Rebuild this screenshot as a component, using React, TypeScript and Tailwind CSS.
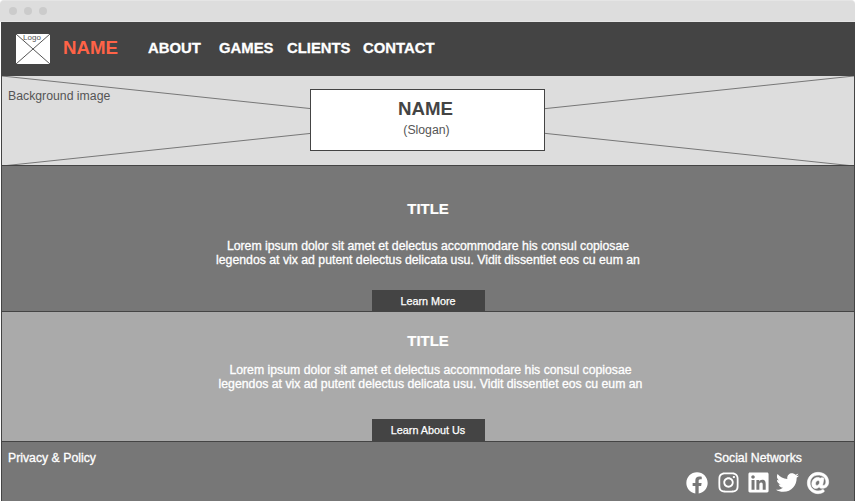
import type { ReactNode } from "react";
import { FaFacebook, FaInstagram, FaLinkedin, FaTwitter, FaAt } from "react-icons/fa";

function Cross({ className }: { className: string }) {
  return (
    <svg className={`absolute top-0 left-0 w-full ${className}`} viewBox="0 0 100 100" preserveAspectRatio="none" fill="none" stroke="currentColor">
      <path d="M0 0L100 100M0 100L100 0" vectorEffect="non-scaling-stroke" />
    </svg>
  );
}

function Section({ className, gap, button, buttonClass }: {
  className: string;
  gap: string;
  button: string;
  buttonClass: string;
}) {
  return (
    <section className={`flex shrink-0 flex-col items-center border-b border-[#444] text-white ${className}`}>
      <h2 className="text-[14.9px] leading-[18px] font-bold [-webkit-text-stroke:0.2px_white]">TITLE</h2>
      <p className={`text-center text-[12.27px] leading-[14px] [-webkit-text-stroke:0.3px_white] ${gap}`}>
        Lorem ipsum dolor sit amet et delectus accommodare his consul copiosae
        <br />
        legendos at vix ad putent delectus delicata usu. Vidit dissentiet eos cu eum an
      </p>
      <button className={`mt-auto w-[113px] bg-[#444] text-[10.8px] leading-[13px] [-webkit-text-stroke:0.25px_white] ${buttonClass}`}>{button}</button>
    </section>
  );
}

function NavItem({ children, className }: { children: ReactNode; className: string }) {
  return <a className={`text-[14.85px] leading-[18px] font-bold text-white [-webkit-text-stroke:0.3px_white] ${className}`}>{children}</a>;
}

export default function App() {
  return (
    <div className="flex h-[501px] w-[855px] flex-col overflow-hidden bg-white font-['Liberation_Sans',Arial,sans-serif]">
      <div className="flex h-[22px] shrink-0 items-center gap-[7px] rounded-t-[4px] border-y border-[#e5e5e5] bg-[#ddd] pl-[9px]">
        <i className="size-2 rounded-full bg-[#cbcbcb]" />
        <i className="size-2 rounded-full bg-[#cbcbcb]" />
        <i className="size-2 rounded-full bg-[#cbcbcb]" />
      </div>
      <div className="ml-px flex grow flex-col border-x border-[#444]">
        <header className="flex h-[54px] shrink-0 items-center bg-[#444] pl-[14px]">
          <div className="relative h-[30px] w-[34px] bg-white pr-[2px] text-center text-[8px] leading-[8px] tracking-[0.1px] text-[#555]">
            <Cross className="h-full text-[#555]" />
            <span className="relative">Logo</span>
          </div>
          <span className="mb-[2px] ml-[13px] w-[85px] text-[18.7px] leading-[22px] font-bold text-[#ff6347]">NAME</span>
          <nav className="mb-[2px] flex">
            <NavItem className="w-[71px]">ABOUT</NavItem>
            <NavItem className="w-[68px]">GAMES</NavItem>
            <NavItem className="w-[76px]">CLIENTS</NavItem>
            <NavItem className="w-[76px]">CONTACT</NavItem>
          </nav>
        </header>
        <div className="relative h-[90px] shrink-0 overflow-hidden border-b border-[#444] bg-[#ddd] pt-[13px]">
          <Cross className="h-[90px] text-[#777]" />
          <div className="flex">
            <span className="w-[308px] pl-[6px] text-[12.27px] leading-[14px] text-[#555]">Background image</span>
            <div className="relative h-[62px] w-[235px] border border-[#444] bg-white pr-[4px] text-center">
              <h1 className="mt-[8px] text-[18.7px] leading-[22px] font-bold text-[#444]">NAME</h1>
              <p className="mt-[3px] ml-[2px] text-[12.27px] leading-[14px] text-[#555]">(Slogan)</p>
            </div>
          </div>
        </div>
        <Section className="h-[146px] bg-[#777] pt-[34px]" gap="mt-[21px]" button="Learn More" buttonClass="h-[21px] pt-[2px]" />
        <Section className="h-[130px] bg-[#aaa] pt-[20px]" gap="mt-[13px] ml-[5px]" button="Learn About Us" buttonClass="h-[22px] pt-[1px]" />
        <footer className="flex grow justify-between bg-[#777] pt-[9px] pr-[25px] pl-[6px] text-[12.27px] leading-[14px] text-white">
          <span className="[-webkit-text-stroke:0.3px_white]">Privacy &amp; Policy</span>
          <div className="flex flex-col">
            <span className="pl-[28px] [-webkit-text-stroke:0.3px_white]">Social Networks</span>
            <div className="mt-[6px] flex h-[23px] items-center">
              <FaFacebook className="size-[22px]" />
              <FaInstagram className="ml-[9px] size-[23px]" />
              <FaLinkedin className="ml-[7px] size-[23px]" />
              <FaTwitter className="ml-[6px] size-[23px]" />
              <FaAt className="ml-[8px] size-[22px] overflow-visible" stroke="currentColor" strokeWidth="14" />
            </div>
          </div>
        </footer>
      </div>
    </div>
  );
}
